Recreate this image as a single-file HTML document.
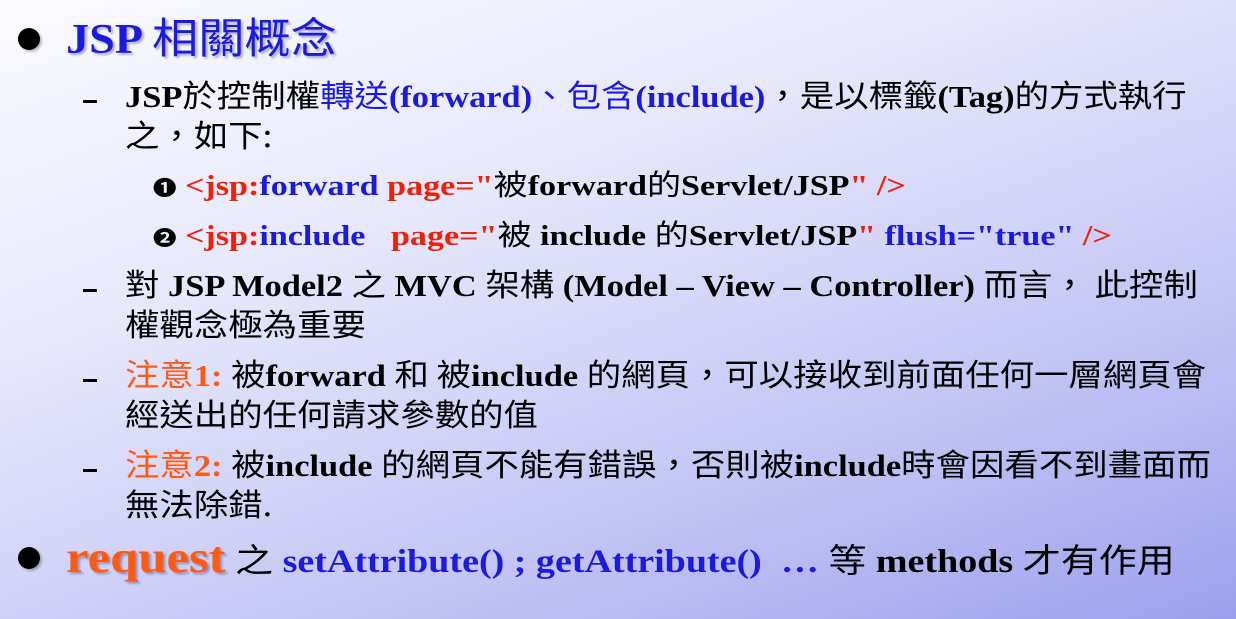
<!DOCTYPE html>
<html><head><meta charset="utf-8"><style>
html,body{margin:0;padding:0}
body{width:1236px;height:619px;overflow:hidden;position:relative;
background:linear-gradient(160deg,#fbfbff 0%,#e6e7fb 35%,#c3c5f5 70%,#9ea0ee 100%);
font-family:"Liberation Serif","Noto Sans CJK TC",serif;font-weight:bold;color:#000}
.l{position:absolute;white-space:nowrap;line-height:1;transform-origin:0 50%}
.c{font-family:"Noto Sans CJK TC","WenQuanYi Zen Hei",sans-serif;font-weight:normal}
.b{color:#1a1ae0}.r{color:#f0200a}.o{color:#ff5a14}
.dot{position:absolute;width:22px;height:22px;border-radius:50%;background:#000;box-shadow:2px 2px 2px rgba(0,0,0,.25)}
.dash{position:absolute;width:14px;height:3px;background:#000}
.sh{text-shadow:2px 2px 2px rgba(0,0,40,.3)}
.t{font-size:31px;transform:scaleX(1.11)}
.k{font-size:29px;transform:scaleX(1.175)}
</style></head><body>
<div class="dot" style="left:18px;top:28px"></div>
<div class="l b sh" style="left:66px;top:15px;font-size:42px;transform:scaleX(1.1)">JSP <span class="c" style="font-weight:normal">相關概念</span></div>

<div class="dash" style="left:83px;top:100px"></div>
<div class="l t" style="left:125px;top:78px">JSP<span class="c">於控制權</span><span class="b"><span class="c">轉送</span>(forward)<span class="c">、包含</span>(include)</span><span class="c">，是以標籤</span>(Tag)<span class="c">的方式執行</span></div>
<div class="l c t" style="left:125px;top:118px">之，如下:</div>

<div class="l k" style="left:153px;top:169px"><span style="font-size:20px">❶</span> <span class="r">&lt;jsp:</span><span class="b">forward</span> <span class="r">page="</span><span class="c">被</span>forward<span class="c">的</span>Servlet/JSP<span class="r">"</span> <span class="r">/&gt;</span></div>
<div class="l k" style="left:153px;top:219px"><span style="font-size:20px">❷</span> <span class="r">&lt;jsp:</span><span class="b">include</span>&nbsp;&nbsp; <span class="r">page="</span><span class="c">被</span> include <span class="c">的</span>Servlet/JSP<span class="r">"</span> <span class="b">flush="true"</span> <span class="r">/&gt;</span></div>

<div class="dash" style="left:83px;top:289px"></div>
<div class="l t" style="left:125px;top:267px"><span class="c">對</span> JSP Model2 <span class="c">之</span> MVC <span class="c">架構</span> (Model – View – Controller) <span class="c">而言， 此控制</span></div>
<div class="l c t" style="left:125px;top:307px">權觀念極為重要</div>

<div class="dash" style="left:83px;top:379px"></div>
<div class="l t" style="left:125px;top:357px"><span class="o"><span class="c">注意</span>1:</span> <span class="c">被</span>forward <span class="c">和 被</span>include <span class="c">的網頁，可以接收到前面任何一層網頁會</span></div>
<div class="l c t" style="left:125px;top:397px">經送出的任何請求參數的值</div>

<div class="dash" style="left:83px;top:469px"></div>
<div class="l t" style="left:125px;top:447px"><span class="o"><span class="c">注意</span>2:</span> <span class="c">被</span>include <span class="c">的網頁不能有錯誤，否則被</span>include<span class="c">時會因看不到畫面而</span></div>
<div class="l c t" style="left:125px;top:487px">無法除錯.</div>

<div class="dot" style="left:18px;top:547px"></div>
<div class="l" style="left:66px;top:536px;font-size:33px;transform:scaleX(1.152)"><span class="o sh" style="font-size:44px">request</span> <span class="c">之</span> <span class="b">setAttribute() ; getAttribute()&nbsp; …</span> <span class="c">等</span> methods <span class="c">才有作用</span></div>
</body></html>
